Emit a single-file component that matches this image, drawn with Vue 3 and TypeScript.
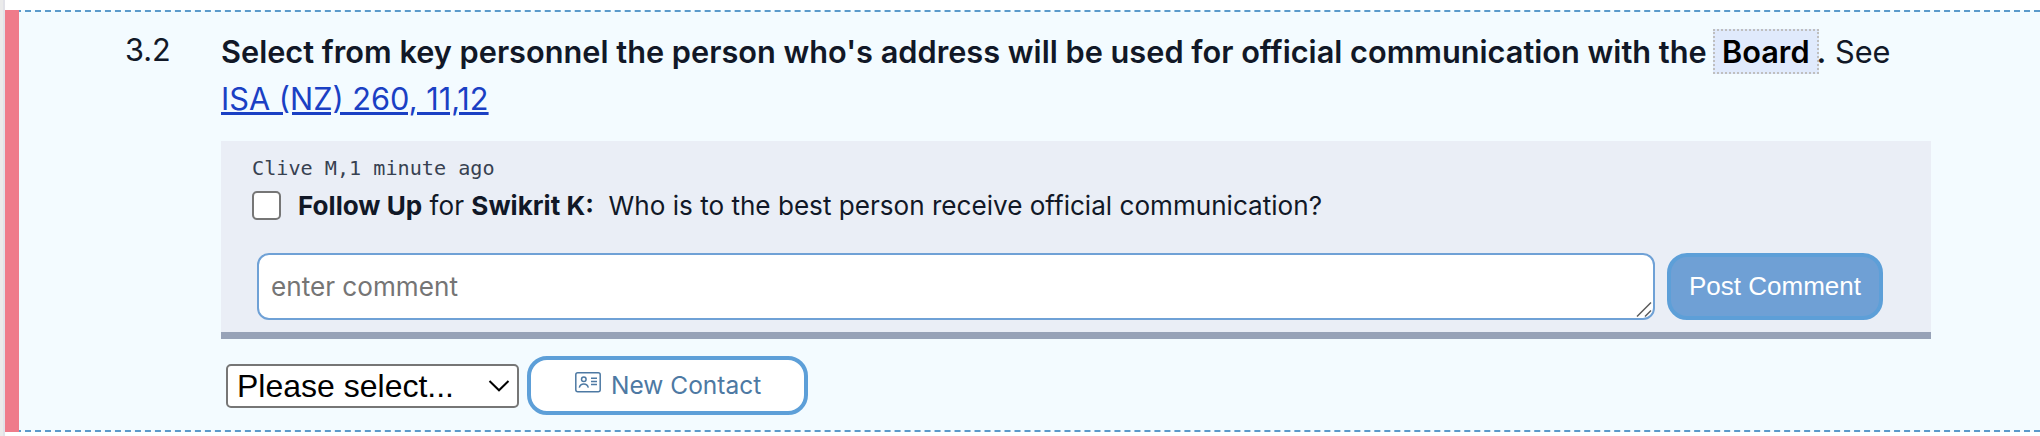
<script setup lang="ts">
import { ref } from 'vue'

interface Note {
  author: string
  age: string
  assignee: string
  text: string
}

const note: Note = {
  author: 'Clive M',
  age: '1 minute ago',
  assignee: 'Swikrit K:',
  text: 'Who is to the best person receive official communication?',
}
const done = ref(false)
const draft = ref('')
</script>

<template>
  <main class="page">
    <section class="item">
      <div class="number">3.2</div>
      <div class="content">
        <p class="question">
          <strong>Select from key personnel the person who's address will be used for official communication with the <span class="term">Board</span>.</strong> <span class="see">See</span><br />
          <a class="link" href="#">ISA (NZ) 260, 11,12</a>
        </p>
        <div class="panel">
          <div class="meta">{{ note.author }},{{ note.age }}</div>
          <label class="note">
            <input v-model="done" class="check" type="checkbox" />
            <span class="note-text"><b>Follow Up</b> for <b>{{ note.assignee }}</b>&nbsp; {{ note.text }}</span>
          </label>
          <div class="reply">
            <div class="field">
              <textarea v-model="draft" class="input" placeholder="enter comment" rows="1"></textarea>
              <svg class="grip" width="16" height="16" viewBox="0 0 16 16">
                <path d="M1 15.5 15 1.5M9 15.5 15 9.5" fill="none" stroke="#5c5c5c" stroke-width="1.5" />
              </svg>
            </div>
            <button class="post" type="button">Post Comment</button>
          </div>
        </div>
        <div class="actions">
          <div class="select" role="combobox" tabindex="0">
            <span>Please select...</span>
            <svg width="22" height="14" viewBox="0 0 22 14">
              <path d="M1.5 2 11 11.3 20.5 2" fill="none" stroke="#000" stroke-width="2" />
            </svg>
          </div>
          <button class="contact" type="button">
            <svg class="card" width="26" height="21" viewBox="0 0 26 21" fill="none" stroke="#4d79a3" stroke-width="1.5">
              <rect x="0.8" y="0.8" width="24.4" height="19" rx="2" />
              <circle cx="8.8" cy="7.3" r="2.3" />
              <path d="M4.3 15.6C5 12.9 6.8 12 8.8 12S12.6 12.9 13.3 15.6M16 6.2H22M16 9.4H22M16 12.5H22" />
            </svg>
            <span class="contact-text">New Contact</span>
          </button>
        </div>
      </div>
    </section>
  </main>
</template>

<style>
body {
  margin: 0;
  background: #fff;
}
</style>

<style scoped>
.page {
  box-sizing: border-box;
  height: 436px;
  padding-top: 10px;
  border-left: 3px solid #ebebeb;
  box-shadow: inset 2px 0 #e2e2e8;
  padding-left: 2px;
  overflow: hidden;
  font-family: Inter, "Liberation Sans", sans-serif;
  color: #111827;
}
.item {
  box-sizing: border-box;
  display: flex;
  height: 422px;
  background: #f3fbff;
  border-top: 2px dashed #5a9acb;
  border-bottom: 2px dashed #5a9acb;
}
.item::before {
  content: "";
  flex: none;
  width: 14px;
  margin: -2px 0;
  background: #ef7b8a;
}
.number {
  flex: none;
  width: 202px;
  box-sizing: border-box;
  padding: 14px 0 0 106px;
  font-size: 30.7px;
  line-height: 48px;
}
.content {
  width: 1710px;
}
.question {
  margin: 0;
  padding-top: 16px;
  height: 113px;
  font-size: 30.72px;
  line-height: 47px;
  white-space: nowrap;
}
.question strong {
  font-weight: 600;
}
.term {
  margin: 0 -2px 0 -1.5px;
  padding: 2px 7px;
  border: 2px dotted #bfbfbf;
  background: #e0eafc;
  color: #000;
}
.link {
  color: #1a40c4;
  text-decoration: underline;
}
.panel {
  box-sizing: border-box;
  height: 198px;
  padding: 13px 48px 0 31px;
  border-bottom: 7px solid #97a2b7;
  background: #eaeef6;
}
.meta {
  height: 29px;
  font: 20.15px/28px "DejaVu Sans Mono", monospace;
  color: #374151;
}
.note {
  display: flex;
  align-items: center;
  height: 45px;
  font-size: 26.1px;
}
.check {
  appearance: none;
  box-sizing: border-box;
  width: 29px;
  height: 29px;
  margin: 0 17px 0 0;
  border: 2px solid #767676;
  border-radius: 5px;
  background: #fff;
}
.note-text {
  white-space: pre;
}
.reply {
  display: flex;
  gap: 12px;
  margin: 25px 0 0 5px;
}
.field {
  position: relative;
  width: 1398px;
  height: 67px;
}
.input {
  box-sizing: border-box;
  display: block;
  width: 100%;
  height: 100%;
  padding: 16px 12px;
  border: 2px solid #6fa1d6;
  border-radius: 12px;
  background: #fff;
  font: 26.13px/32px Inter, "Liberation Sans", sans-serif;
  resize: none;
  overflow: hidden;
}
.input::placeholder {
  color: #757575;
}
.grip {
  position: absolute;
  right: 3px;
  bottom: 3px;
}
.post {
  box-sizing: border-box;
  width: 216px;
  height: 67px;
  padding: 0 0 2px;
  border: 4px solid #5d9fd8;
  border-radius: 20px;
  background: #6fa0d5;
  color: #fff;
  font: 26px/30px "Liberation Sans", Arial, sans-serif;
  white-space: nowrap;
}
.actions {
  display: flex;
  align-items: center;
  gap: 8px;
  padding: 17px 0 0 5px;
}
.select {
  box-sizing: border-box;
  display: flex;
  align-items: center;
  justify-content: space-between;
  width: 293px;
  height: 44px;
  padding: 0 7px 0 9px;
  border: 2px solid #767676;
  border-radius: 5px;
  background: #fff;
  color: #000;
  font: 32px/40px "Liberation Sans", Arial, sans-serif;
}
.contact {
  box-sizing: border-box;
  display: flex;
  align-items: center;
  width: 281px;
  height: 59px;
  padding: 0 0 0 44px;
  border: 4px solid #5d9fd8;
  border-radius: 20px;
  background: #fff;
  color: #4d79a3;
  font: 24.5px/30px Inter, "Liberation Sans", sans-serif;
  white-space: nowrap;
}
.contact-text {
  padding-bottom: 2px;
}
.card {
  margin: -6px 10px 0 0;
}
</style>
